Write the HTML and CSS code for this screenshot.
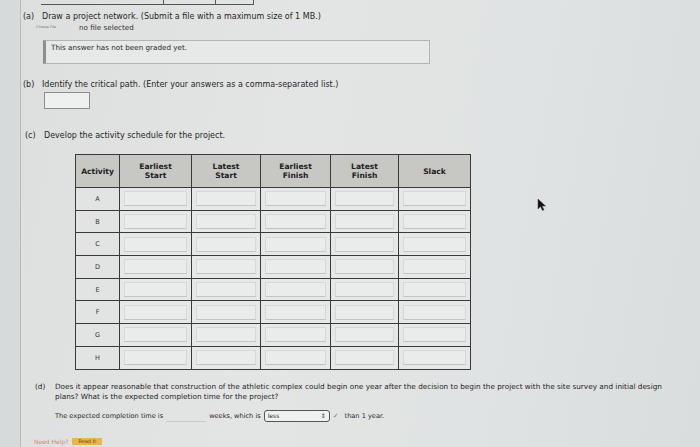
FILE: index.html
```html
<!DOCTYPE html>
<html>
<head>
<meta charset="utf-8">
<link rel="stylesheet" href="styles.css">
</head>
<body>
<div class="page">
  <div class="rail"></div>
  <div class="main">
    <div class="prev-table"><span class="pc pc1"></span><span class="pc pc2"></span><span class="pc pc3"></span></div>

    <div class="q q-a"><span class="lbl">(a)</span><span>Draw a project network. (Submit a file with a maximum size of 1 MB.)</span></div>
    <div class="file-row"><span class="choose">Choose File</span><span class="nofile">no file selected</span></div>
    <div class="graded">This answer has not been graded yet.</div>

    <div class="q q-b"><span class="lbl">(b)</span><span>Identify the critical path. (Enter your answers as a comma-separated list.)</span></div>
    <div class="answer-box"></div>

    <div class="q q-c"><span class="lbl">(c)</span><span>Develop the activity schedule for the project.</span></div>

    <table class="sched">
      <thead>
        <tr>
          <th class="c-act">Activity</th>
          <th class="c-es">Earliest<br>Start</th>
          <th class="c-ls">Latest<br>Start</th>
          <th class="c-ef">Earliest<br>Finish</th>
          <th class="c-lf">Latest<br>Finish</th>
          <th class="c-sl">Slack</th>
        </tr>
      </thead>
      <tbody>
        <tr><td class="act">A</td><td><div class="inp"></div></td><td><div class="inp"></div></td><td><div class="inp"></div></td><td><div class="inp"></div></td><td><div class="inp"></div></td></tr>
        <tr><td class="act">B</td><td><div class="inp"></div></td><td><div class="inp"></div></td><td><div class="inp"></div></td><td><div class="inp"></div></td><td><div class="inp"></div></td></tr>
        <tr><td class="act">C</td><td><div class="inp"></div></td><td><div class="inp"></div></td><td><div class="inp"></div></td><td><div class="inp"></div></td><td><div class="inp"></div></td></tr>
        <tr><td class="act">D</td><td><div class="inp"></div></td><td><div class="inp"></div></td><td><div class="inp"></div></td><td><div class="inp"></div></td><td><div class="inp"></div></td></tr>
        <tr><td class="act">E</td><td><div class="inp"></div></td><td><div class="inp"></div></td><td><div class="inp"></div></td><td><div class="inp"></div></td><td><div class="inp"></div></td></tr>
        <tr><td class="act">F</td><td><div class="inp"></div></td><td><div class="inp"></div></td><td><div class="inp"></div></td><td><div class="inp"></div></td><td><div class="inp"></div></td></tr>
        <tr><td class="act">G</td><td><div class="inp"></div></td><td><div class="inp"></div></td><td><div class="inp"></div></td><td><div class="inp"></div></td><td><div class="inp"></div></td></tr>
        <tr><td class="act">H</td><td><div class="inp"></div></td><td><div class="inp"></div></td><td><div class="inp"></div></td><td><div class="inp"></div></td><td><div class="inp"></div></td></tr>
      </tbody>
    </table>

    <div class="q q-d"><span class="lbl">(d)</span><span class="d-text">Does it appear reasonable that construction of the athletic complex could begin one year after the decision to begin the project with the site survey and initial design plans? What is the expected completion time for the project?</span></div>
    <div class="completion">
      <span>The expected completion time is</span>
      <span class="weeks-box"></span>
      <span>weeks, which is</span>
      <span class="select"><span>less</span><span class="arrows">&#8661;</span></span>
      <span class="check">&#10003;</span>
      <span>than 1 year.</span>
    </div>
    <div class="help"><span class="need">Need Help?</span><span class="read">Read It</span></div>
  </div>
</div>
<div class="cursor"><svg width="9" height="13" viewBox="0 0 9 13"><path d="M1 1 L1 11 L3.5 8.5 L5.5 12.5 L7 11.8 L5 8 L8.5 8 Z" fill="#111" stroke="#444" stroke-width="0.5"/></svg></div>
</body>
</html>
```
FILE: styles.css
```css
html, body {
  margin: 0;
  padding: 0;
}
body {
  width: 700px;
  height: 447px;
  overflow: hidden;
  background: linear-gradient(100deg, #dcdfde 0%, #e3e5e4 40%, #e0e3e3 70%, #dadddd 100%);
  font-family: "DejaVu Sans", Verdana, sans-serif;
  color: #262626;
  font-size: 7.6px;
  position: relative;
}
.page {
  display: flex;
  height: 447px;
}
.rail {
  width: 20px;
  flex: none;
  border-right: 1px solid #b9bcbc;
  background: #d7dada;
}
.main {
  flex: 1;
  padding-left: 2px;
}
.prev-table {
  display: flex;
  margin-left: 18px;
  width: 213px;
  height: 4px;
  border-bottom: 1px solid #555;
}
.pc { display: block; height: 4px; }
.pc1 { width: 123px; border-right: 1px solid #555; }
.pc2 { width: 51px; border-right: 1px solid #555; }
.pc3 { width: 37px; border-right: 1px solid #555; }

.q {
  display: flex;
  line-height: 11px;
  font-size: 8px;
}
.lbl {
  width: 19px;
  flex: none;
}
.q-a { margin-top: 6px; }
.file-row {
  display: flex;
  align-items: center;
  height: 10px;
  padding-left: 13px;
}
.choose {
  font-size: 3.5px;
  color: #777;
  width: 43px;
}
.nofile {
  font-size: 7.2px;
  color: #333;
}
.graded {
  margin-top: 8px;
  margin-left: 20px;
  width: 378px;
  height: 22px;
  border: 1px solid #b3b5b5;
  border-left: 3px solid #8e9090;
  background: #e7e9e8;
  font-size: 7.2px;
  line-height: 14px;
  padding-left: 5px;
}
.q-b { margin-top: 15px; }
.answer-box {
  margin-top: 2px;
  margin-left: 21px;
  width: 44px;
  height: 15px;
  border: 1px solid #8c8e8e;
  background: #eef0ef;
}
.q-c { margin-top: 21px; padding-left: 2px; }

.sched {
  margin-top: 13px;
  margin-left: 52px;
  border-collapse: collapse;
  table-layout: fixed;
  width: 389px;
}
.sched th, .sched td {
  border: 1px solid #3a3a3a;
  padding: 0;
}
.sched th {
  height: 32px;
  background: #c7c8c3;
  font-weight: bold;
  font-size: 7.6px;
  line-height: 9px;
  text-align: center;
  vertical-align: middle;
  color: #222;
}
.c-act { width: 43px; }
.c-es { width: 71px; }
.c-ls { width: 68px; }
.c-ef { width: 69px; }
.c-lf { width: 67px; }
.c-sl { width: 71px; }
.sched td {
  height: 21.7px;
  background: #e6e8e7;
}
.sched td.act {
  text-align: center;
  font-size: 6.5px;
  color: #333;
  background: #e2e4e3;
}
.inp {
  margin: 0 4px;
  height: 13px;
  border: 1px solid #d6d8d7;
  border-bottom-color: #c2c5c4;
  background: #eaeceb;
}

.q-d {
  margin-top: 12px;
  padding-left: 12px;
  font-size: 7.3px;
  line-height: 10.5px;
}
.q-d .lbl { width: 20px; }
.d-text { width: 626px; }
.completion {
  display: flex;
  align-items: center;
  margin-top: 7px;
  margin-left: 32px;
  font-size: 6.6px;
  height: 12px;
}
.weeks-box {
  width: 40px;
  height: 11px;
  border-bottom: 1px solid #c9cccb;
  margin: 0 3px;
}
.select {
  display: flex;
  align-items: center;
  justify-content: space-between;
  width: 58px;
  height: 10px;
  border: 1px solid #555;
  border-radius: 3px;
  margin-left: 3px;
  padding: 0 3px;
  font-size: 6px;
  background: #f0f1f1;
}
.arrows { font-size: 6px; color: #333; }
.check {
  color: #6a8a6a;
  margin: 0 6px 0 3px;
  font-size: 7px;
}
.help {
  margin-top: 16px;
  margin-left: 11px;
  display: flex;
  align-items: center;
  font-size: 6px;
  line-height: 7px;
}
.need { color: #d08a7a; }
.read {
  margin-left: 4px;
  background: #e7b647;
  color: #6a4a10;
  padding: 0 6px;
  font-size: 5px;
  line-height: 7px;
}
.cursor {
  position: absolute;
  left: 537px;
  top: 198px;
}
```
